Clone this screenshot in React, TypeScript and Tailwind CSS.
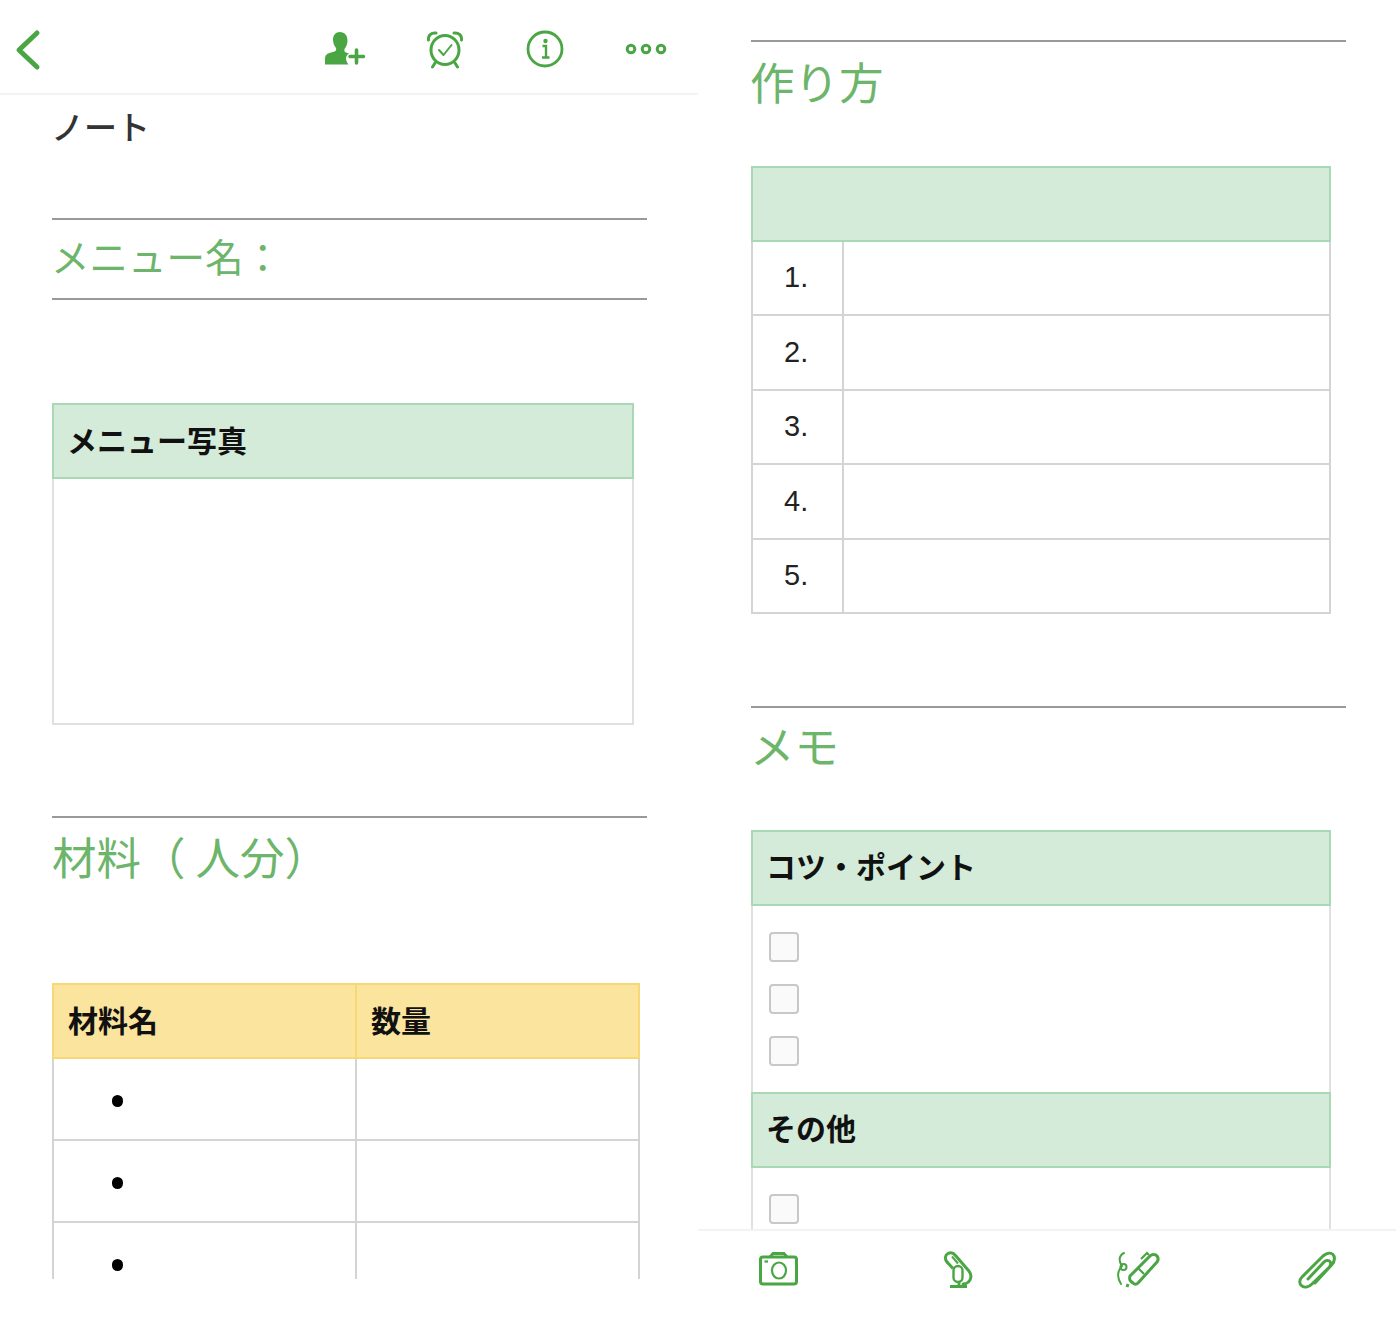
import React from 'react';

const green = '#4aa543';

function Rule({className}: {className: string}) {
    return <div className={"h-[2px] bg-[#999999] w-[595px] " + className}/>;
}

function Heading({text, className}: {text: string, className: string}) {
    return <div className={"text-[#6cb56a] text-[44.500px] leading-[60px] font-normal " + className}>{text}</div>;
}

function HeaderCell({text, className}: {text: string, className: string}) {
    return (
        <div className={"h-[76px] flex items-center px-[13px] pb-1 text-[30px] font-bold text-[#111111] bg-[#d3ebd8] border-2 border-[#a9d8b4] " + className}>
            {text}
        </div>
    );
}

function CheckBox({className}: {className: string}) {
    return <div className={"w-[30px] h-[30px] rounded-[4px] border-2 border-[#c8c8c8] bg-[#fafafa] " + className}/>;
}

function StepRow({n}: {n: number}) {
    return (
        <div className="h-[74.4px] flex border-b-2 border-[#d4d4d4] text-[29px] text-[#222222] font-['Liberation_Sans',sans-serif]">
            <div className="w-[91px] border-r-2 border-[#d4d4d4] flex items-center pl-[31px]">{n}.</div>
        </div>
    );
}

function BulletRow() {
    return (
        <div className="h-[82px] flex border-b-2 border-[#d4d4d4] shrink-0">
            <div className="w-[303px] border-r-2 border-[#d4d4d4] flex items-center pl-[58px]">
                <div className="w-[11px] h-[12px] mt-1 rounded-full bg-black"/>
            </div>
        </div>
    );
}

function TopBar() {
    return (
        <div className="h-[95px] border-b-2 border-[#f3f3f3] flex items-start relative">
            <svg width="30" height="44" viewBox="0 0 30 44" fill="none" className="mt-[28px] ml-[13px]">
                <path d="M24 5 L6 22 L24 39" stroke={green} strokeWidth="5" strokeLinecap="round" strokeLinejoin="round"/>
            </svg>
            <svg width="44" height="38" viewBox="0 0 44 38" className="absolute left-[323px] top-[30px]" fill={green}>
                <path d="M17 2c4.500 0 7.500 3.500 7.500 8.500 0 3.500-1.300 6.500-3 8.500-.4 1.500 0 3 1.500 3.500l3 1c-2 1-3 3-3 5 0 2 1 4 2.500 6H2v-6c0-3 1.500-4.500 4.500-5.500l5-1.500c1.500-.5 2-2 1.500-3.500-1.700-2-3-5-3-8.500C10 5.500 12.500 2 17 2z"/>
                <path d="M33.500 20v13M27 26.500h13.500" stroke={green} strokeWidth="3.600" strokeLinecap="round" fill="none"/>
            </svg>
            <svg width="40" height="40" viewBox="0 0 40 40" fill="none" stroke={green} className="absolute left-[425px] top-[29px]">
                <ellipse cx="20" cy="21" rx="14" ry="14.500" strokeWidth="3"/>
                <path d="M14 21l4.500 5L26.500 16" strokeWidth="2" strokeLinecap="round" strokeLinejoin="round"/>
                <path d="M3.500 11C3 6.500 6 3.500 11 4M36.500 11C37 6.500 34 3.500 29 4" strokeWidth="3" strokeLinecap="round"/>
                <path d="M10 34l-2.500 4M30 34l2.500 4" strokeWidth="3" strokeLinecap="round"/>
            </svg>
            <svg width="40" height="40" viewBox="0 0 40 40" fill="none" className="absolute left-[525px] top-[29px]">
                <circle cx="20" cy="20" r="17" stroke={green} strokeWidth="2.800"/>
                <circle cx="20.500" cy="12" r="2.200" fill={green}/>
                <path d="M17.500 17h3.500v11M17 28.500h7.500" stroke={green} strokeWidth="2.400" fill="none"/>
            </svg>
            <svg width="44" height="12" viewBox="0 0 44 12" fill="none" stroke={green} strokeWidth="3" className="absolute left-[624px] top-[43px]">
                <circle cx="7" cy="6" r="3.800"/>
                <circle cx="22" cy="6" r="3.800"/>
                <circle cx="37" cy="6" r="3.800"/>
            </svg>
        </div>
    );
}

function BottomBar() {
    return (
        <div className="h-[114px] border-t-2 border-[#f3f3f3] relative">
            <svg width="44" height="36" viewBox="0 0 44 36" fill="none" stroke={green} className="absolute left-[59px] top-[20px]">
                <rect x="3.500" y="6" width="36" height="27" rx="2.500" strokeWidth="3"/>
                <path d="M13 6l3-3.500h11L30 6" strokeWidth="2.800"/>
                <ellipse cx="22" cy="19.500" rx="7" ry="8" strokeWidth="2.200"/>
                <path d="M7.500 10.500h3.500" strokeWidth="2.200"/>
            </svg>
            <svg width="36" height="38" viewBox="0 0 36 38" fill="none" stroke={green} className="absolute left-[243px] top-[20px]">
                <path d="M6 11C3.500 8 4 4 7 2.500c3-1.500 5.500-.5 7.500 2l13 15c3.500 4 3 9 0 11.500-1.500 1.500-3.500 2-5.500 2" strokeWidth="3" strokeLinecap="round"/>
                <path d="M6 11l6 6.500" strokeWidth="3"/>
                <path d="M11 5.500l6 7" strokeWidth="2"/>
                <rect x="12.500" y="15" width="9" height="16" rx="4.500" strokeWidth="2.400"/>
                <path d="M18 31v4M9 35.500h17" strokeWidth="2.800"/>
            </svg>
            <svg width="48" height="38" viewBox="0 0 48 38" fill="none" stroke={green} className="absolute left-[416px] top-[20px]">
                <path d="M10 2C4 5 5 11 8 15c-5 5-5 12-1 18" strokeWidth="2" strokeLinecap="round"/>
                <circle cx="9.500" cy="16" r="3" strokeWidth="2"/>
                <path d="M14 33l-1 3M16 25L36 5c2-2 5.500-2 7 0s1.500 4 0 6L24 32c-1.500 1.500-3.500 1.500-5 0l-2.500-2c-1-1.500-1-3.500-.5-5z" strokeWidth="3" strokeLinejoin="round"/>
                <path d="M24 17l6 6M27 8l6-6 2 2" strokeWidth="2.200"/>
            </svg>
            <svg width="44" height="38" viewBox="0 0 44 38" fill="none" stroke={green} strokeWidth="3" strokeLinecap="round" className="absolute left-[597px] top-[20px]">
                <path d="M13 28L29 11c2-2 5-2 6-.5s1 4-1 6L17 33c-3 3-7 4-10 2s-3-6 0-9L28 5c4-3.500 8-3.500 10-1.500s2 7-1 10L20 32"/>
            </svg>
        </div>
    );
}

export default function App() {
    return (
        <div className="w-[1396px] h-[1343px] bg-white grid grid-cols-[698px_698px] overflow-hidden font-['Noto_Sans_CJK_JP','Noto_Sans',sans-serif]">
            <div className="h-[1279px] overflow-hidden">
                <TopBar/>
                <div className="pl-[52px]">
                    <div className="text-[33px] leading-[44px] mt-[9px] text-[#333333] h-[44px] font-medium -ml-[1px]">ノート</div>
                    <Rule className="mt-[70px]"/>
                    <div className="text-[#6cb56a] text-[38.500px] leading-[70px] h-[78px] font-normal -ml-[1px]">メニュー名：</div>
                    <Rule className=""/>
                    <div className="w-[582px] mt-[103px] border-2 border-t-0 border-[#e0e0e0] -mb-[1px]">
                        <HeaderCell text="メニュー写真" className="-mx-[2px]"/>
                        <div className="h-[244px]"/>
                    </div>
                    <Rule className="mt-[92px]"/>
                    <Heading text="材料（ 人分）" className="mt-[8px]"/>
                    <div className="w-[588px] mt-[97px] border-x-2 border-[#d4d4d4]">
                        <div className="flex -mx-[2px] h-[76px]">
                            <div className="w-[303px] h-[76px] flex items-center px-[14px] pb-1 text-[30px] font-bold text-[#111111] bg-[#fae49e] border-2 border-r-0 border-[#f8d775]">材料名</div>
                            <div className="flex-1 h-[76px] flex items-center px-[14px] pb-1 text-[30px] font-bold text-[#111111] bg-[#fae49e] border-2 border-[#f8d775]">数量</div>
                        </div>
                        <BulletRow/>
                        <BulletRow/>
                        <BulletRow/>
                    </div>
                </div>
            </div>
            <div className="h-[1343px] flex flex-col">
                <div className="h-[1229px] overflow-hidden pl-[53px]">
                    <Rule className="mt-[40px]"/>
                    <Heading text="作り方" className="mt-[9px] -ml-[1px]"/>
                    <div className="w-[580px] mt-[55px] border-x-2 border-[#d4d4d4]">
                        <HeaderCell text="" className="-mx-[2px]"/>
                        {[1, 2, 3, 4, 5].map((n: number) => <StepRow key={n} n={n}/>)}
                    </div>
                    <Rule className="mt-[92px]"/>
                    <Heading text="メモ" className="mt-[7px] -ml-[1px]"/>
                    <div className="w-[580px] mt-[55px] border-x-2 border-[#e0e0e0]">
                        <HeaderCell text="コツ・ポイント" className="-mx-[2px]"/>
                        <div className="h-[186px] pl-[16px] pt-[26px] flex flex-col gap-[22px]">
                            <CheckBox className=""/>
                            <CheckBox className=""/>
                            <CheckBox className=""/>
                        </div>
                        <HeaderCell text="その他" className="-mx-[2px]"/>
                        <div className="h-[80px] pl-[16px] pt-[26px]">
                            <CheckBox className=""/>
                        </div>
                    </div>
                </div>
                <BottomBar/>
            </div>
        </div>
    );
}
